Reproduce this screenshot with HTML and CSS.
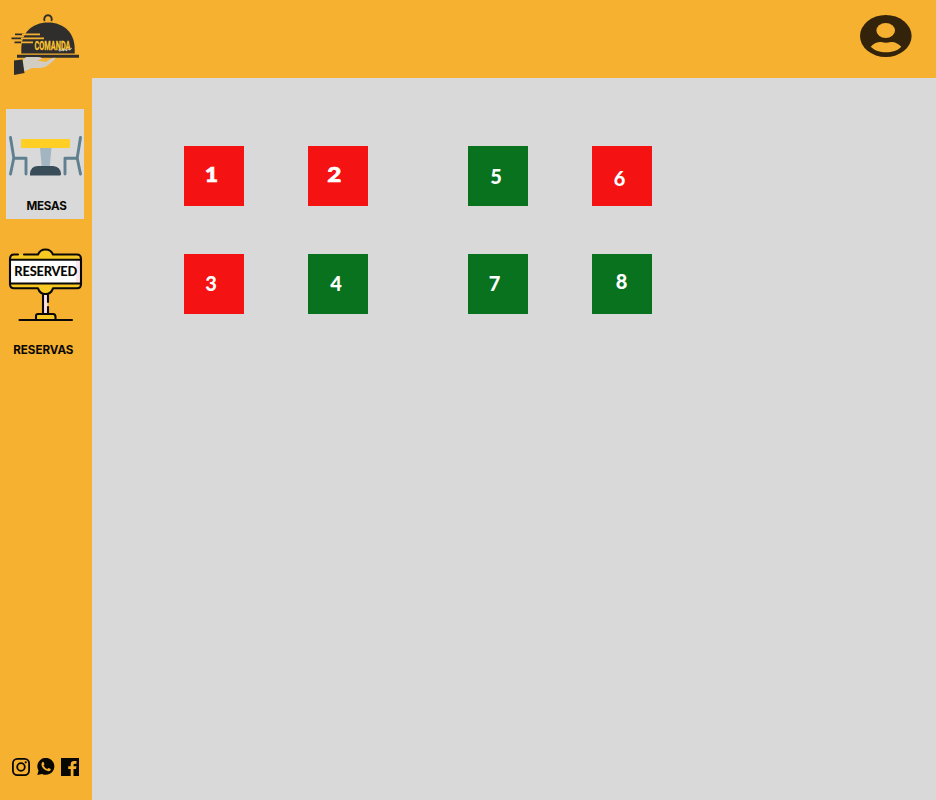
FILE: index.html
```html
<!DOCTYPE html>
<html lang="es">
<head>
<meta charset="utf-8">
<title>Comanda - Mesas</title>
<link rel="stylesheet" href="styles.css">
</head>
<body>
<header class="topbar">
  <svg class="logo" viewBox="0 0 100 90" role="img" aria-label="Comanda">
    <path d="M44.700 21A3.800 3.800 0 1 1 51.300 21" fill="none" stroke="#2f2e2d" stroke-width="1.900"/>
    <path d="M21.300 53.500V49C21.300 33 32 22.500 48 22.500S74.700 33 74.700 49v4.500Z" fill="#2f2e2d"/>
    <path d="M17 54.700H79V57.800H17Z" fill="#2f2e2d"/>
    <path d="M15 34.400H24M11.500 38.400H24M14.500 42.400H23" stroke="#2f2e2d" stroke-width="1.900"/>
    <path d="M22 34.400H40M21 38.400H44M21 42.400H33" stroke="#f6b130" stroke-width="1.600"/>
    <path d="M23 60L26 57H38Q42 57 42 59L37 60.500 46 62Q51 58 55.500 57.800 55 60 50 63.500 46 67.500 40 68H32L23 72Z" fill="#d2cdc3"/>
    <path d="M14 60.500L22.500 59.500 24.500 73 14 75Z" fill="#2f2e2d"/>
    <text x="34.500" y="49.700" class="logo-name" textLength="36" lengthAdjust="spacingAndGlyphs">COMANDA</text>
    <path d="M61 49q-3 0-2 2 4 0 5-2l-1 2 3-2 0 2 3-2v1l3-2" fill="none" stroke="#d8d4c8" stroke-width=".8"/>
  </svg>
  <svg class="avatar" viewBox="0 0 52 42" aria-label="Perfil">
    <ellipse cx="25.800" cy="21" rx="25.800" ry="21" fill="#33230a"/>
    <ellipse cx="25.700" cy="15.500" rx="9.300" ry="7.600" fill="#f6b130"/>
    <path d="M10.700 31.700C14 28 18 26.800 21 27q3 .8 5 .8t5-.8c4-.2 8 2 10.300 4.700C38 35.500 32 37.200 26 37.200S14.500 35.500 10.700 31.700Z" fill="#f6b130"/>
  </svg>
</header>
<div class="body">
  <nav class="sidebar">
    <a class="nav-item active">
      <svg class="table-icon" viewBox="0 0 78 48">
        <path d="M34 17H45.500L43.500 38H36Z" fill="#a2b5c1"/>
        <rect x="15" y="8" width="49" height="9" rx="1" fill="#ffcf25"/>
        <path d="M24 44.500V43Q24.500 35 32 35H47Q54.500 35.500 55 43 55 44.500 53.500 44.500Z" fill="#394d58"/>
        <path d="M4.500 6.500L7.800 27 4.500 43M7.500 27.200H20V43M74.500 6.500L71.200 27 74.500 43M71.500 27.200H59V43" fill="none" stroke="#5f8090" stroke-width="2.900" stroke-linecap="round" stroke-linejoin="round"/>
      </svg>
      <span class="label mesas">MESAS</span>
    </a>
    <a class="nav-item">
      <svg class="reserved-icon" viewBox="0 0 78 76">
        <path d="M37 42H41.500V69H37Z" fill="#f9dfe6"/>
        <path d="M4.500 14V9Q6 8.500 32 8.500 34 3.500 39.500 3.500T47 8.500H71Q75 8.500 75 12V38Q75 42 71 42H47Q45 48 39.500 48T32 42H9Q4 42 4 38Z" fill="#f8c823"/>
        <path d="M4 14H75V37.500H4Z" fill="#fff"/>
        <path d="M70 14H75V37.500H70Z" fill="#fae6ed"/>
        <path d="M30 74V70Q30 68 32 68H47Q49.500 68 49.500 71V74Z" fill="#f8c823"/>
        <path d="M12 8.500H8Q4 8.500 4 13V38Q4 42.300 8 42.300H32Q34 48 39.500 48T47 42.300H71Q75 42.300 75 38V13Q75 8.500 71 8.500H47Q45 3.500 39.500 3.500T32 8.500H18M4 13.800H75M4 37.500H75M37 48V68M42 48V56M42 61V68M30 74V70Q30 68 32 68H47Q49.500 68 49.500 71V74M13.500 74H66" fill="none" stroke="#0b0907" stroke-width="2.100" stroke-linecap="round" stroke-linejoin="round"/>
        <text x="8.300" y="30.300" class="sign-text" textLength="63" lengthAdjust="spacing">RESERVED</text>
      </svg>
      <span class="label reservas">RESERVAS</span>
    </a>
    <div class="social">
      <svg viewBox="0 0 18 18" aria-label="Instagram">
        <rect x=".9" y=".9" width="16.200" height="16.200" rx="4.500" fill="none" stroke="#090702" stroke-width="1.800"/>
        <circle cx="9" cy="9" r="3.800" fill="none" stroke="#090702" stroke-width="1.800"/>
        <circle cx="13.700" cy="4.300" r="1.100" fill="#090702"/>
      </svg>
      <svg viewBox="0 0 18 18" aria-label="WhatsApp">
        <path d="M.3 17L1.500 12.600A8.500 8.500 0 1 1 5 15.900Z" fill="#090702"/>
        <path d="M5.200 4.200Q6.200 3.300 6.800 4.500L7.500 6.300 6.500 7.500Q7.800 10 10.200 11L11.500 9.900 13.800 11Q14 13.200 11.500 13.300 8.500 13 6 10.200 3.300 7 5.200 4.200Z" fill="#f6b130"/>
      </svg>
      <svg viewBox="0 0 18 18" aria-label="Facebook">
        <path d="M0 0H18V18H0Z" fill="#090702"/>
        <path d="M9.700 18V11H7.200V8.300H9.700V6.300Q9.700 3 13 3H15.500V5.700H14Q12.500 5.700 12.500 7V8.300H15.500L15 11H12.500V18Z" fill="#f6b130"/>
      </svg>
    </div>
  </nav>
  <main class="floor">
    <section class="zone">
      <div class="mesa busy"><span class="n1">1</span></div>
      <div class="mesa busy"><span class="n2">2</span></div>
      <div class="mesa busy"><span class="n3">3</span></div>
      <div class="mesa free"><span class="n4">4</span></div>
    </section>
    <section class="zone">
      <div class="mesa free"><span class="n5">5</span></div>
      <div class="mesa busy"><span class="n6">6</span></div>
      <div class="mesa free"><span class="n7">7</span></div>
      <div class="mesa free"><span class="n8">8</span></div>
    </section>
  </main>
</div>
</body>
</html>
```
FILE: styles.css
```css
* { box-sizing: border-box; }
body {
  margin: 0;
  height: 800px;
  display: flex;
  flex-direction: column;
  overflow: hidden;
  background: #f6b130;
  font-family: Lato, "Liberation Sans", sans-serif;
  color: #090702;
}
svg { display: block; flex: none; }
.topbar {
  height: 78px;
  flex: none;
  display: flex;
  justify-content: space-between;
  align-items: flex-start;
  padding-right: 24px;
}
.logo { width: 100px; height: 90px; margin-bottom: -12px; }
.logo-name {
  font: 700 13px Roboto, sans-serif;
  fill: #fbc52f;
  stroke: #fbc52f;
  stroke-width: .3px;
}
.avatar { width: 52px; height: 42px; margin-top: 15px; }
.body { flex: 1; display: flex; min-height: 0; }
.sidebar {
  width: 92px;
  flex: none;
  display: flex;
  flex-direction: column;
  padding: 31px 8px 24px 6px;
}
.nav-item {
  display: flex;
  flex-direction: column;
  align-items: flex-start;
  width: 78px;
  height: 110px;
}
.active { background: #d9d9d9; margin-bottom: 26px; }
.table-icon { width: 78px; height: 48px; margin-top: 22px; }
.reserved-icon { width: 78px; height: 76px; margin-top: 1px; }
.sign-text { font: 900 12.8px Lato, sans-serif; fill: #090702; }
.label {
  font-family: Inter, Lato, sans-serif;
  font-size: 11.6px;
  font-weight: 700;
  line-height: 14px;
  white-space: nowrap;
}
.mesas { margin: 20px 0 0 20.5px; letter-spacing: -.25px; }
.reservas { margin: 21px 0 0 7.3px; letter-spacing: -.05px; }
.social { display: flex; gap: 6.500px; margin: auto 0 0 6px; }
.social svg { width: 18px; height: 18px; }
.floor {
  flex: 1;
  display: flex;
  align-items: flex-start;
  gap: 100px;
  padding: 68px 0 0 92px;
  background: #d9d9d9;
}
.zone { display: grid; grid-template-columns: 60px 60px; gap: 48px 64px; }
.mesa {
  height: 60px;
  display: flex;
  align-items: center;
  justify-content: center;
  color: #fff;
  font-size: 20px;
  font-weight: 900;
  line-height: 24px;
}
.busy { background: #f41212; }
.free { background: #08721f; }
.n1, .n2 { -webkit-text-stroke: .6px #fff; }
.n1 { transform: translate(-2.5px, -2px) scaleX(1.15); }
.n2 { transform: translate(-3.5px, -2px) scaleX(1.22); }
.n3 { transform: translate(-3px, -.7px); }
.n4 { transform: translate(-2px, -.7px); }
.n5 { transform: translate(-2px, 0); }
.n6 { transform: translate(-2.5px, 2.2px); }
.n7 { transform: translate(-3.5px, -.7px); }
.n8 { transform: translate(-.5px, -3px); }
```
